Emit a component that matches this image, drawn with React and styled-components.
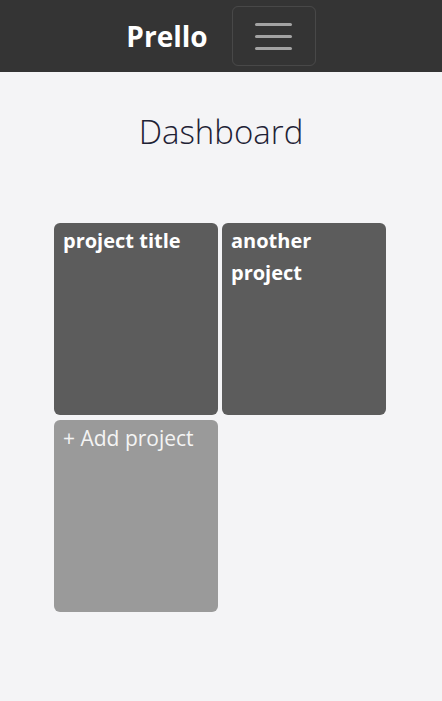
import React from "react"
import styled, { createGlobalStyle } from "styled-components"

const GlobalStyle = createGlobalStyle`
  body {
    margin: 0;
    background: #f4f4f6;
    font-family: "Open Sans", "Noto Sans", sans-serif;
  }
`

const NavBar = styled.nav`
  height: 72px;
  background: #343434;
  display: flex;
  align-items: center;
  justify-content: center;
  gap: 24px;
`

const Brand = styled.span`
  color: #fff;
  font-size: 28px;
  font-weight: 700;
`

const Toggler = styled.button`
  width: 84px;
  height: 60px;
  background: transparent;
  border: 1px solid rgba(255, 255, 255, 0.1);
  border-radius: 6px;
  display: flex;
  flex-direction: column;
  align-items: center;
  justify-content: center;
  gap: 9px;
  padding: 0;
`

const Bar = styled.span`
  display: block;
  width: 37px;
  height: 3px;
  border-radius: 2px;
  background: #a3a3a3;
`

const Main = styled.main`
  display: flex;
  flex-direction: column;
  align-items: center;
`

const Title = styled.h1`
  margin: 36px 0 0;
  font-size: 33px;
  font-weight: 300;
  color: #1e2235;
  line-height: 48px;
`

const Grid = styled.div`
  margin-top: 67px;
  display: grid;
  grid-template-columns: 164px 164px;
  grid-auto-rows: 192px;
  gap: 5px 4px;
  transform: translateX(-1px);
`

const Card = styled.div`
  background: ${(p) => (p.add ? "#9a9a9a" : "#5c5c5c")};
  border-radius: 6px;
  padding: 2px 9px;
  color: ${(p) => (p.add ? "#f4f4f4" : "#fff")};
  font-size: ${(p) => (p.add ? "21px" : "20px")};
  font-weight: ${(p) => (p.add ? 400 : 700)};
  line-height: 32px;
`

const projects = ["project title", "another project"]

export default function App() {
  return (
    <>
      <GlobalStyle />
      <NavBar>
        <Brand>Prello</Brand>
        <Toggler>
          <Bar />
          <Bar />
          <Bar />
        </Toggler>
      </NavBar>
      <Main>
        <Title>Dashboard</Title>
        <Grid>
          {projects.map((p) => (
            <Card key={p}>{p}</Card>
          ))}
          <Card add>+ Add project</Card>
        </Grid>
      </Main>
    </>
  )
}
